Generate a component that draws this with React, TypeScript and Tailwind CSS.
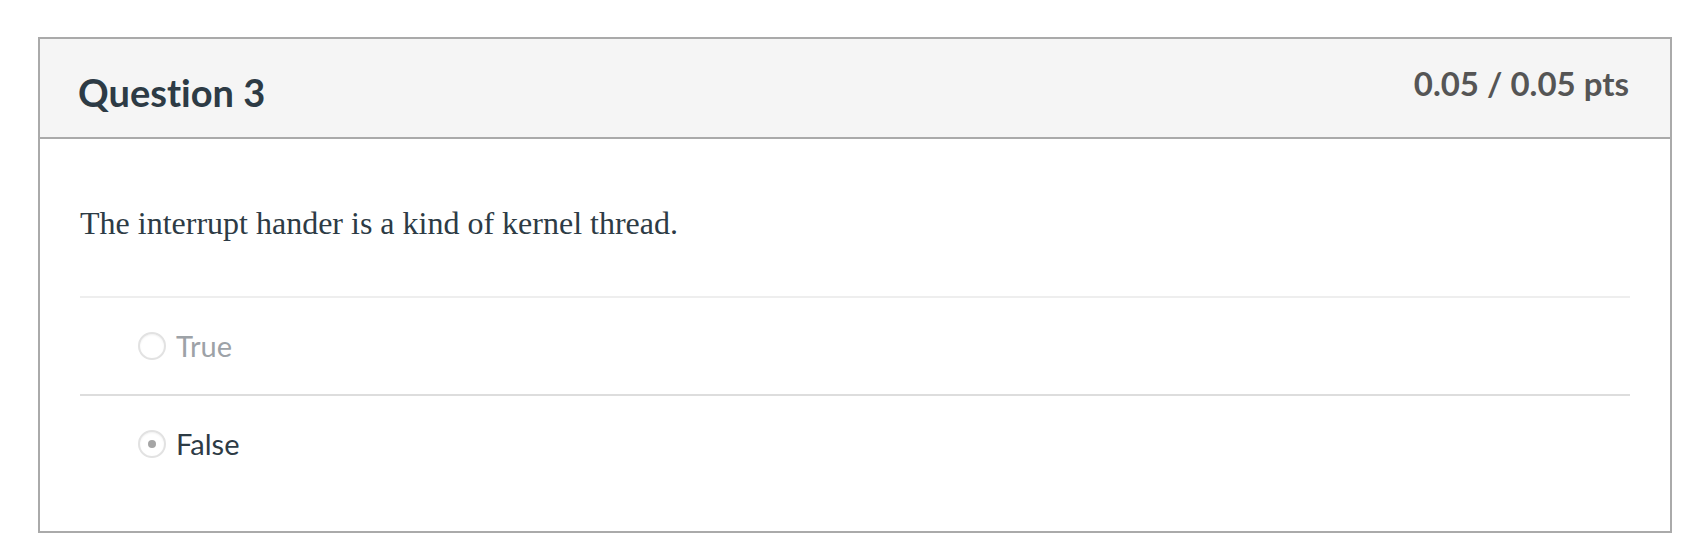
import React from "react"

interface AnswerProps {
  label: string
  selected?: boolean
  muted?: boolean
}

const Answer = ({ label, selected, muted }: AnswerProps) => {
  return (
    <div className="h-[96px] flex items-center pl-[58px]">
      <span className="w-[28px] h-[28px] rounded-full border-2 border-[#e2e2e2] bg-white flex items-center justify-center shadow-[inset_0_1px_2px_rgba(0,0,0,0.06)]">
        {selected && <span className="w-[8px] h-[8px] rounded-full bg-[#a5a5a5]" />}
      </span>
      <span
        className={`ml-[10px] text-[29px] leading-[34px] font-normal ${muted ? "text-[#9da2a7]" : "text-[#2d3b45]"}`}
      >
        {label}
      </span>
    </div>
  )
}

export default function App() {
  return (
    <div
      className="min-h-[560px] bg-white pt-[37px] pl-[38px] [font-variant-ligatures:none]"
      style={{ fontFamily: "Lato, 'Noto Sans', sans-serif" }}
    >
      <div className="w-[1634px] border-2 border-[#aaaaaa] bg-white">
        {/* header */}
        <div className="h-[100px] bg-[#f5f5f5] border-b-2 border-[#aaaaaa] flex justify-between pl-[38px] pr-[41px]">
          <h3 className="mt-[31px] text-[38px] leading-[45px] font-bold text-[#2d3b45]">Question 3</h3>
          <span className="mt-[24px] text-[33px] leading-[40px] font-bold text-[#555555]">0.05 / 0.05 pts</span>
        </div>

        {/* body */}
        <div className="px-[40px] pt-[66px] pb-[39px]">
          <p
            className="text-[32px] leading-[36px] text-[#2d3b45]"
            style={{ fontFamily: "'Liberation Serif', 'Times New Roman', serif" }}
          >
            The interrupt hander is a kind of kernel thread.
          </p>
          <div className="mt-[55px] border-t-2 border-[#eeeeee]">
            <Answer label="True" muted />
          </div>
          <div className="border-t-2 border-[#dddddd]">
            <Answer label="False" selected />
          </div>
        </div>
      </div>
    </div>
  )
}
